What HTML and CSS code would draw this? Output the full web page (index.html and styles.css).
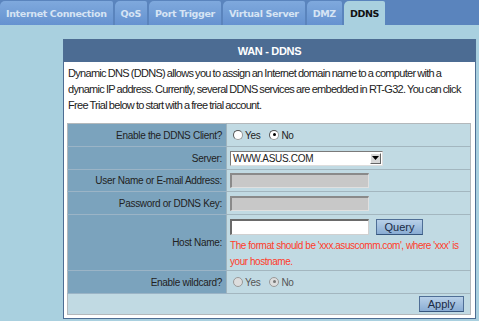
FILE: index.html
```html
<!DOCTYPE html>
<html>
<head>
<meta charset="utf-8">
<link rel="stylesheet" href="styles.css">
</head>
<body>
<div class="tabs">
  <div class="tab">Internet Connection</div>
  <div class="tab">QoS</div>
  <div class="tab">Port Trigger</div>
  <div class="tab">Virtual Server</div>
  <div class="tab">DMZ</div>
  <div class="tab active">DDNS</div>
</div>
<div class="panel">
  <div class="panel-head">WAN - DDNS</div>
  <p class="desc">Dynamic DNS (DDNS) allows you to assign an Internet domain name to a computer with a dynamic IP address. Currently, several DDNS services are embedded in RT-G32. You can click Free Trial below to start with a free trial account.</p>
  <table class="form">
    <tr class="r23">
      <th>Enable the DDNS Client?</th>
      <td><span class="radio"></span><span class="opt">Yes</span><span class="radio on"></span><span class="opt">No</span></td>
    </tr>
    <tr class="r23">
      <th>Server:</th>
      <td><div class="select"><span>WWW.ASUS.COM</span><span class="drop"><svg width="7" height="4" viewBox="0 0 7 4"><path d="M0 0h7L3.5 4z" fill="#000"/></svg></span></div></td>
    </tr>
    <tr class="r22">
      <th>User Name or E-mail Address:</th>
      <td><div class="input dis"></div></td>
    </tr>
    <tr class="r23">
      <th>Password or DDNS Key:</th>
      <td><div class="input dis"></div></td>
    </tr>
    <tr class="host">
      <th>Host Name:</th>
      <td>
        <div class="hostline"><div class="input"></div><button class="btn query">Query</button></div>
        <div class="warn">The format should be 'xxx.asuscomm.com', where 'xxx' is your hostname.</div>
      </td>
    </tr>
    <tr class="r23">
      <th>Enable wildcard?</th>
      <td class="disabled"><span class="radio"></span><span class="opt">Yes</span><span class="radio on"></span><span class="opt">No</span></td>
    </tr>
    <tr class="apply">
      <td colspan="2"><button class="btn">Apply</button></td>
    </tr>
  </table>
</div>
</body>
</html>
```
FILE: styles.css
```css
html, body {
  margin: 0;
  padding: 0;
}
body {
  background: #a9d0df;
  font-family: "Liberation Sans", Arial, sans-serif;
  width: 479px;
  height: 321px;
  overflow: hidden;
}
.tabs {
  display: flex;
  gap: 2px;
  height: 24px;
  padding-top: 1px;
  background: #5a84bd;
}
.tab {
  box-sizing: border-box;
  height: 24px;
  line-height: 25px;
  padding: 0 6px;
  font-family: "DejaVu Sans", Verdana, sans-serif;
  font-weight: bold;
  font-size: 9.5px;
  letter-spacing: -0.35px;
  color: #d6e4f4;
  background: linear-gradient(#7fa9dd, #6592d0);
  border-radius: 5px 2px 0 0;
}
.tab.active {
  background: #a9d0df;
  color: #111;
}
.panel {
  margin: 14px 0 0 63px;
  width: 411px;
  border: 1px solid #4d6d93;
  background: #fff;
  padding-bottom: 3px;
}
.panel-head {
  height: 22px;
  line-height: 22px;
  background: #4c6c93;
  color: #fff;
  font-weight: bold;
  font-size: 11px;
  letter-spacing: -0.3px;
  text-align: center;
}
.desc {
  margin: 3px 8px 10px 4px;
  font-size: 11px;
  line-height: 16px;
  letter-spacing: -0.7px;
  word-spacing: -0.5px;
  color: #222;
}
.form {
  margin-left: 3px;
  width: 404px;
  border-collapse: collapse;
  border: 1px solid #b3b8bb;
  font-size: 10px;
  color: #222;
}
.form th {
  width: 154px;
  background: #7ba3bd;
  font-weight: normal;
  text-align: right;
  letter-spacing: -0.3px;
  padding: 0 4px 0 0;
  border-bottom: 1px solid #9bb4c6;
  border-right: 1px solid #9fb3bd;
}
.form td {
  background: #c1dae3;
  padding: 0 0 0 3px;
  border-bottom: 1px solid #a3b6bf;
}
.r23 { height: 23px; }
.r22 { height: 22px; }
.host { height: 56px; }
.host td { padding-top: 4px; vertical-align: top; }
.apply { height: 21px; }
.apply td {
  text-align: right;
  padding-right: 6px;
  border-bottom: 0;
}
.radio {
  display: inline-block;
  box-sizing: border-box;
  width: 10px;
  height: 10px;
  border-radius: 50%;
  background: #fff;
  border: 1px solid #999;
  border-top-color: #555;
  border-left-color: #555;
  vertical-align: -1px;
  margin: 0 2px 0 3px;
  position: relative;
}
.radio.on::after {
  content: "";
  position: absolute;
  left: 2.5px;
  top: 2.5px;
  width: 3px;
  height: 3px;
  border-radius: 50%;
  background: #000;
}
.opt { margin-right: 6px; letter-spacing: -0.3px; }
.disabled { color: #555; }
.disabled .radio { background: #ddd; border-color: #999; }
.disabled .radio.on::after { background: #777; }
.select {
  box-sizing: border-box;
  width: 153px;
  height: 15px;
  background: #fff;
  border: 1px solid #7a7a7a;
  border-right-color: #ddd;
  border-bottom-color: #ddd;
  display: flex;
  justify-content: space-between;
  align-items: center;
  font-size: 10px;
  letter-spacing: -0.3px;
  padding-left: 2px;
}
.drop {
  width: 11px;
  height: 11px;
  margin-right: 1px;
  box-sizing: border-box;
  background: #d8d8d8;
  border: 1px solid #fff;
  border-right-color: #666;
  border-bottom-color: #666;
  display: flex;
  align-items: center;
  justify-content: center;
}
.input {
  box-sizing: border-box;
  width: 139px;
  height: 16px;
  background: #fff;
  border: 1px solid #d0d0d0;
  border-top: 2px solid #6a6a6a;
  border-left: 2px solid #6a6a6a;
}
.input.dis {
  height: 15px;
  background: #c8c8c8;
  border-top-color: #8a8a8a;
  border-left-color: #8a8a8a;
  border-right-color: #e0e0e0;
  border-bottom-color: #e0e0e0;
}
.hostline {
  display: flex;
  align-items: center;
  gap: 7px;
}
.btn {
  box-sizing: border-box;
  height: 16px;
  padding: 0;
  font-family: "Liberation Sans", Arial, sans-serif;
  font-size: 11px;
  color: #1a2a44;
  background: linear-gradient(#b8d0e8, #89acd3);
  border: 1px solid #4f6e96;
  border-bottom-color: #35557d;
  width: 45px;
  line-height: 14px;
}
.btn.query { width: 47px; }
.warn {
  margin-top: 3px;
  font-size: 10px;
  line-height: 16px;
  letter-spacing: -0.45px;
  color: #ff3c2a;
  width: 240px;
}
```
